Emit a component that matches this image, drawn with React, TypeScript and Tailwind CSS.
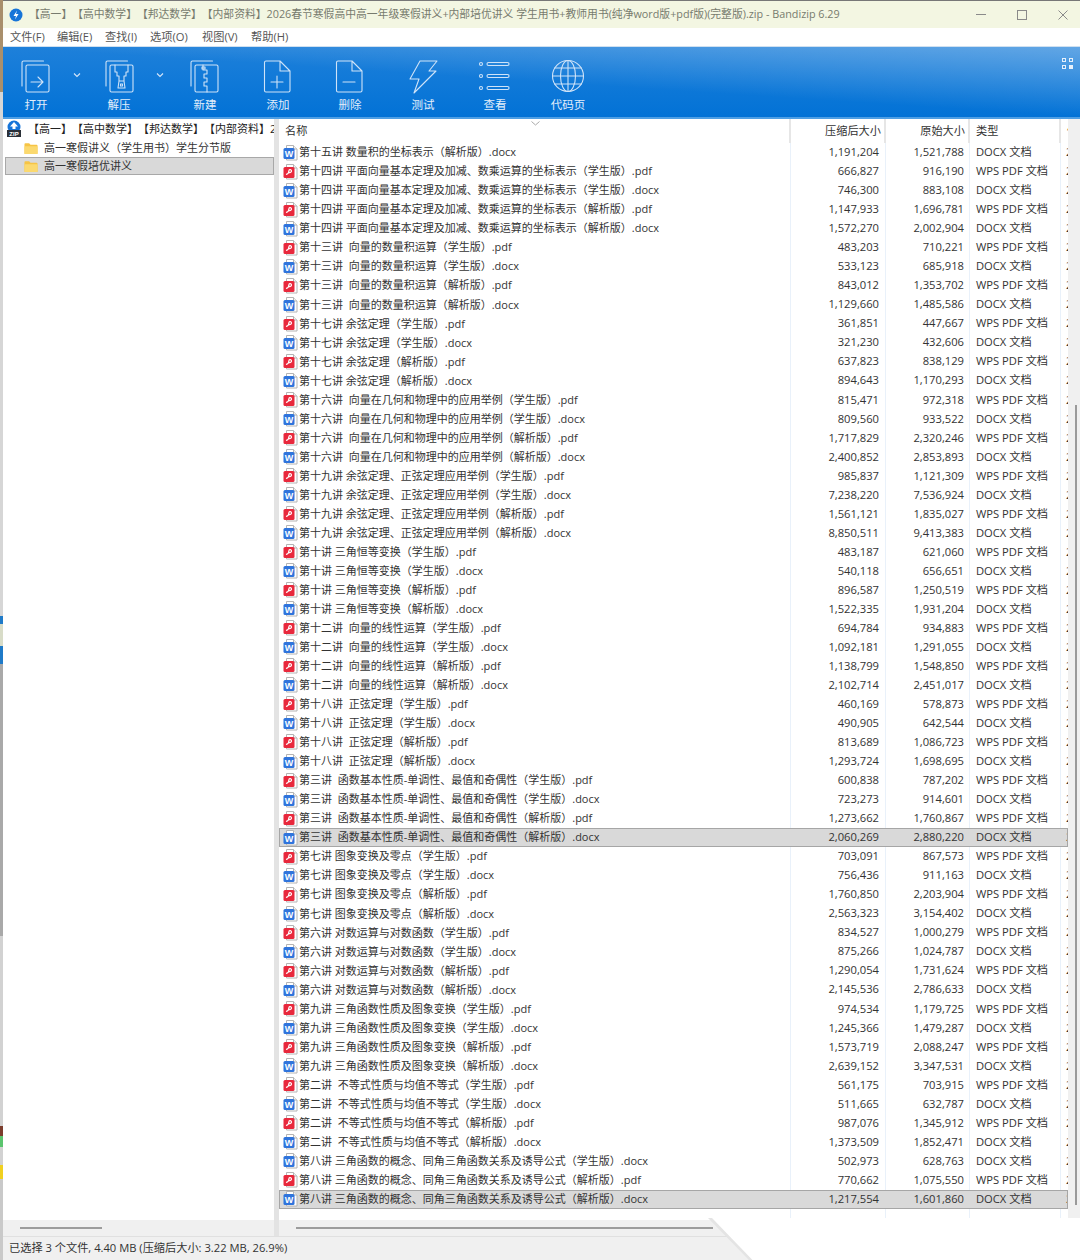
import type { ReactNode } from "react";

const VARIANTS = ["（学生版）.pdf", "（学生版）.docx", "（解析版）.pdf", "（解析版）.docx"];

type Group = {
  title: string
  offset?: number
  sizes: [string, string][]
}

const GROUPS: Group[] = [
  { title: "第十五讲 数量积的坐标表示", offset: 3, sizes: [["1,191,204", "1,521,788"]] },
  { title: "第十四讲 平面向量基本定理及加减、数乘运算的坐标表示", sizes: [["666,827", "916,190"], ["746,300", "883,108"], ["1,147,933", "1,696,781"], ["1,572,270", "2,002,904"]] },
  { title: "第十三讲  向量的数量积运算", sizes: [["483,203", "710,221"], ["533,123", "685,918"], ["843,012", "1,353,702"], ["1,129,660", "1,485,586"]] },
  { title: "第十七讲 余弦定理", sizes: [["361,851", "447,667"], ["321,230", "432,606"], ["637,823", "838,129"], ["894,643", "1,170,293"]] },
  { title: "第十六讲  向量在几何和物理中的应用举例", sizes: [["815,471", "972,318"], ["809,560", "933,522"], ["1,717,829", "2,320,246"], ["2,400,852", "2,853,893"]] },
  { title: "第十九讲 余弦定理、正弦定理应用举例", sizes: [["985,837", "1,121,309"], ["7,238,220", "7,536,924"], ["1,561,121", "1,835,027"], ["8,850,511", "9,413,383"]] },
  { title: "第十讲 三角恒等变换", sizes: [["483,187", "621,060"], ["540,118", "656,651"], ["896,587", "1,250,519"], ["1,522,335", "1,931,204"]] },
  { title: "第十二讲  向量的线性运算", sizes: [["694,784", "934,883"], ["1,092,181", "1,291,055"], ["1,138,799", "1,548,850"], ["2,102,714", "2,451,017"]] },
  { title: "第十八讲  正弦定理", sizes: [["460,169", "578,873"], ["490,905", "642,544"], ["813,689", "1,086,723"], ["1,293,724", "1,698,695"]] },
  { title: "第三讲  函数基本性质-单调性、最值和奇偶性", sizes: [["600,838", "787,202"], ["723,273", "914,601"], ["1,273,662", "1,760,867"], ["2,060,269", "2,880,220"]] },
  { title: "第七讲 图象变换及零点", sizes: [["703,091", "867,573"], ["756,436", "911,163"], ["1,760,850", "2,203,904"], ["2,563,323", "3,154,402"]] },
  { title: "第六讲 对数运算与对数函数", sizes: [["834,527", "1,000,279"], ["875,266", "1,024,787"], ["1,290,054", "1,731,624"], ["2,145,536", "2,786,633"]] },
  { title: "第九讲 三角函数性质及图象变换", sizes: [["974,534", "1,179,725"], ["1,245,366", "1,479,287"], ["1,573,719", "2,088,247"], ["2,639,152", "3,347,531"]] },
  { title: "第二讲  不等式性质与均值不等式", sizes: [["561,175", "703,915"], ["511,665", "632,787"], ["987,076", "1,345,912"], ["1,373,509", "1,852,471"]] },
  { title: "第八讲 三角函数的概念、同角三角函数关系及诱导公式", offset: 1, sizes: [["502,973", "628,763"], ["770,662", "1,075,550"], ["1,217,554", "1,601,860"]] },
];

const ROWS = GROUPS.flatMap((g) =>
  g.sizes.map(([packed, size], i) => {
    const variant = VARIANTS[i + (g.offset ?? 0)];
    return { name: g.title + variant, packed, size, pdf: variant.endsWith(".pdf") };
  })
);

const SELECTED = [36, 55];

function FileIcon({ pdf }: { pdf: boolean }) {
  return (
    <svg width="15" height="16" viewBox="0 0 15 16" className="shrink-0">
      <path d="M3.5.5h7l3.5 3.500v11h-10.500z" fill="#fff" stroke="#b4b4b4" />
      <path d="M10.500.5v3.500h3.500" fill="#f2f2f2" stroke="#b4b4b4" />
      <rect x="0.500" y="3" width="11" height="11" rx="1.500" fill={pdf ? "#e8283c" : "#2f74dc"} />
      {pdf ? (
        <path d="M3 10.500c2-.5 3-2 3-4 0-1.500 2.500-1 2.500.5s-2 2-3.500 1.500" fill="none" stroke="#fff" strokeWidth="1.200" />
      ) : (
        <text x="6" y="12" textAnchor="middle" fontSize="9" fontWeight="700" fill="#fff" fontFamily="Liberation Sans">W</text>
      )}
    </svg>
  )
}

function FolderIcon() {
  return (
    <svg width="14" height="13" viewBox="0 0 15 13" className="shrink-0">
      <path d="M.5 2a1 1 0 0 1 1-1h4l1.500 1.500h6.500a1 1 0 0 1 1 1v8a1 1 0 0 1-1 1h-12a1 1 0 0 1-1-1z" fill="#f6c445" />
      <rect x="0.500" y="4" width="14" height="8.500" rx="1" fill="#fbd96f" />
    </svg>
  )
}

function ToolIcon({ children }: { children: ReactNode }) {
  return (
    <svg width="36" height="36" viewBox="0 0 36 36" fill="none" stroke="#cfe3f8" strokeWidth="1.100" strokeLinejoin="round" strokeLinecap="round">
      {children}
    </svg>
  )
}

function ToolButton({ label, width, children }: { label: string; width: string; children: ReactNode }) {
  return (
    <div className={`${width} flex flex-col items-center shrink-0`}>
      {children}
      <span className="mt-[2px] text-[11.5px] leading-[16px] text-[#e2eefb]">{label}</span>
    </div>
  )
}

function Chevron() {
  return (
    <svg width="8" height="6" viewBox="0 0 8 6" fill="none" stroke="#d7e7f9" strokeWidth="1.100" className="mt-[13px] shrink-0">
      <path d="M1 1.500l3 3 3-3" />
    </svg>
  )
}

export default function App() {
  return (
    <div className="relative w-[1080px] h-[1260px] flex overflow-hidden bg-white text-[#333] font-['Open_Sans','Noto_Sans_CJK_SC',sans-serif] text-[11.2px]">
      {/* desktop showing behind the window */}
      <div className="w-[3px] shrink-0 flex flex-col bg-[#c9c9c9]">
        <div className="h-[92px] bg-[#a98f6c]" />
        <div className="h-[524px] bg-[#d6d6d6]" />
        <div className="h-[8px] bg-[#1f7ac8]" />
        <div className="h-[22px] bg-[#d8dcc8]" />
        <div className="h-[18px] bg-[#1f7ac8]" />
        <div className="h-[272px] bg-[#a9a9a9]" />
        <div className="h-[190px] bg-[#d2d2d2]" />
        <div className="h-[10px] bg-[#7b3c2c]" />
        <div className="h-[11px] bg-[#5bc46e]" />
        <div className="h-[18px] bg-[#d2d2d2]" />
        <div className="h-[14px] bg-[#f0d020]" />
      </div>

      <div className="flex-1 min-w-0 flex flex-col">
        <div className="h-[28px] shrink-0 flex items-center bg-[#f3f6e2] border-t border-[#777] pl-[6px] text-[#777b6e]">
          <svg width="14" height="14" viewBox="0 0 14 14" className="shrink-0">
            <circle cx="7" cy="7" r="6.500" fill="#1674d8" />
            <path d="M8 2.500L4.500 8H7l-1 3.500L9.500 6H7z" fill="#fff" />
          </svg>
          <span className="ml-[6px] whitespace-nowrap text-[10.8px] [text-spacing-trim:space-all]">【高一】【高中数学】【邦达数学】【内部资料】2026春节寒假高中高一年级寒假讲义+内部培优讲义 学生用书+教师用书(纯净word版+pdf版)(完整版).zip - Bandizip 6.29</span>
          <div className="ml-auto flex items-center gap-[31px] pr-[12px]">
            <div className="w-[10px] h-px bg-[#8a8a8a]" />
            <div className="w-[10px] h-[10px] border border-[#8a8a8a]" />
            <svg width="10" height="10" viewBox="0 0 10 10" stroke="#8a8a8a"><path d="M.5.500l9 9M9.500.500l-9 9" /></svg>
          </div>
        </div>

        <div className="h-[18px] shrink-0 flex items-center pl-[7px] text-[#555]">
          <span className="w-[47px]">文件(F)</span>
          <span className="w-[48px]">编辑(E)</span>
          <span className="w-[45px]">查找(I)</span>
          <span className="w-[52px]">选项(O)</span>
          <span className="w-[49px]">视图(V)</span>
          <span>帮助(H)</span>
        </div>

        <div className="relative h-[73px] shrink-0 flex pt-[12px] border-t border-[#cfe0f0] border-b-2 border-b-[#4f9fe4] bg-[linear-gradient(to_bottom_left,rgba(255,255,255,0.3),rgba(255,255,255,0)_50%),linear-gradient(to_bottom,#1e80da,#0272d6)]">
          <ToolButton label="打开" width="w-[66px]">
            <ToolIcon>
              <path d="M4 27V3.500a1.500 1.500 0 0 1 1.500-1.500h20" />
              <rect x="8" y="6" width="23" height="27" rx="1.500" />
              <path d="M13 23h11M20 18l5 5-5 5" />
            </ToolIcon>
          </ToolButton>
          <div className="w-[16px] flex justify-center"><Chevron /></div>
          <ToolButton label="解压" width="w-[68px]">
            <ToolIcon>
              <path d="M5 27V3.500a1.500 1.500 0 0 1 1.500-1.500h20" />
              <rect x="9" y="6" width="23" height="27" rx="1.500" />
              <path d="M14 6v7h2v4h2v5M27 6v7h-2v4h-2v5M18 22h5l1 7h-7z" />
              <rect x="19.500" y="25" width="2" height="2" />
            </ToolIcon>
          </ToolButton>
          <div className="w-[14px] flex justify-center"><Chevron /></div>
          <ToolButton label="新建" width="w-[76px]">
            <ToolIcon>
              <path d="M4 27V3.500a1.500 1.500 0 0 1 1.500-1.500h20" />
              <rect x="8" y="6" width="23" height="27" rx="1.500" />
              <path d="M16 6v5h4v4h-3v4h3v4h-3v4h3v6" />
              <rect x="15" y="8" width="3" height="2" />
            </ToolIcon>
          </ToolButton>
          <ToolButton label="添加" width="w-[70px]">
            <ToolIcon>
              <path d="M6 2h14l10 10v19.500a1.500 1.500 0 0 1-1.500 1.500h-22.500a1.500 1.500 0 0 1-1.500-1.500v-28a1.500 1.500 0 0 1 1.500-1.500zM20 2v10h10" />
              <path d="M17 17v12M11 23h12" />
            </ToolIcon>
          </ToolButton>
          <ToolButton label="删除" width="w-[74px]">
            <ToolIcon>
              <path d="M6 2h14l10 10v19.500a1.500 1.500 0 0 1-1.500 1.500h-22.500a1.500 1.500 0 0 1-1.500-1.500v-28a1.500 1.500 0 0 1 1.500-1.500zM20 2v10h10" />
              <path d="M11 23h12" />
            </ToolIcon>
          </ToolButton>
          <ToolButton label="测试" width="w-[72px]">
            <ToolIcon>
              <path d="M15 2h17l-8 10h7L9 34l5-14H5z" />
            </ToolIcon>
          </ToolButton>
          <ToolButton label="查看" width="w-[72px]">
            <ToolIcon>
              <circle cx="4" cy="5" r="1.500" />
              <circle cx="4" cy="17" r="1.500" />
              <circle cx="4" cy="29" r="1.500" />
              <rect x="10" y="3.500" width="22" height="3" rx="1.500" />
              <rect x="10" y="15.500" width="22" height="3" rx="1.500" />
              <rect x="10" y="27.500" width="22" height="3" rx="1.500" />
            </ToolIcon>
          </ToolButton>
          <ToolButton label="代码页" width="w-[74px]">
            <ToolIcon>
              <circle cx="18" cy="17" r="15.500" />
              <ellipse cx="18" cy="17" rx="7.500" ry="15.500" />
              <path d="M18 1.500v31M2.500 17h31M4.500 9h27M4.500 25h27" />
            </ToolIcon>
          </ToolButton>
          <div className="absolute top-[11px] right-[7px] grid grid-cols-2 gap-[3px]">
            <div className="w-[4px] h-[4px] border border-[#e6f0fb]" />
            <div className="w-[4px] h-[4px] border border-[#e6f0fb]" />
            <div className="w-[4px] h-[4px] border border-[#e6f0fb]" />
            <div className="w-[4px] h-[4px] bg-[#e6f0fb]" />
          </div>
        </div>

        <div className="flex-1 min-h-0 flex">
          <div className="w-[271px] shrink-0 flex flex-col text-[11px]">
            <div className="flex-1 min-h-0 pl-[2px] overflow-hidden">
              <div className="h-[20px] flex items-center whitespace-nowrap overflow-hidden">
                <svg width="18" height="18" viewBox="0 0 18 18" className="shrink-0">
                  <circle cx="9" cy="7" r="6.500" fill="#1674d8" />
                  <path d="M9 2l4 4.500h-2.500V9h-3V6.500H5z" fill="#fff" />
                  <rect x="2" y="10" width="14" height="7" fill="#2a3038" />
                  <text x="9" y="16" textAnchor="middle" fontSize="6" fontWeight="700" fill="#fff" fontFamily="Liberation Sans">ZIP</text>
                </svg>
                <span className="ml-[5px] text-[#222] [text-spacing-trim:space-all]">【高一】【高中数学】【邦达数学】【内部资料】2026春节寒假高中高一年级</span>
              </div>
              <div className="h-[18px] flex items-center pl-[19px] whitespace-nowrap">
                <FolderIcon />
                <span className="ml-[6px]">高一寒假讲义（学生用书）学生分节版</span>
              </div>
              <div className="h-[18px] flex items-center pl-[18px] whitespace-nowrap bg-[#d9d9d9] border-y border-x border-[#a8a8a8]">
                <FolderIcon />
                <span className="ml-[6px]">高一寒假培优讲义</span>
              </div>
            </div>
            <div className="h-[16px] shrink-0 flex items-center bg-[#f0f0f0] pl-[17px]">
              <div className="w-[82px] h-[2px] bg-[#9c9c9c]" />
            </div>
          </div>

          <div className="w-[5px] shrink-0 bg-[#e3e3e3]" />

          <div className="flex-1 min-w-0 flex flex-col">
            <div className="flex-1 min-h-0 flex">
              <div className="relative w-[789px] shrink-0 overflow-hidden">
                <div className="absolute top-[24px] bottom-0 left-[511px] w-px bg-[#e9f1fa]" />
                <div className="absolute top-[24px] bottom-0 left-[606px] w-px bg-[#e9f1fa]" />
                <div className="absolute top-[24px] bottom-0 left-[690px] w-px bg-[#e9f1fa]" />
                <div className="absolute top-[24px] bottom-0 left-[781px] w-px bg-[#e9f1fa]" />
                <svg width="9" height="5" viewBox="0 0 9 5" fill="none" stroke="#aaa" className="absolute top-[2px] left-[252px]"><path d="M.5.500l4 3.500 4-3.500" /></svg>

                <div className="h-[24px] flex items-center">
                  <div className="w-[512px] pl-[6px] border-r-2 border-[#e6e6e6] h-full flex items-center">名称</div>
                  <div className="w-[95px] pr-[3px] text-right border-r-2 border-[#e6e6e6] h-full flex items-center justify-end">压缩后大小</div>
                  <div className="w-[84px] pr-[3px] text-right border-r-2 border-[#e6e6e6] h-full flex items-center justify-end">原始大小</div>
                  <div className="w-[91px] pl-[6px] border-r-2 border-[#e6e6e6] h-full flex items-center">类型</div>
                  <div className="pl-[6px] h-full flex items-center w-[7px] overflow-hidden text-[#b5763a]">修</div>
                </div>

                {ROWS.map((row, i) => (
                  <div
                    key={row.name}
                    className={`relative h-[19.036px] flex items-center whitespace-pre ${SELECTED.includes(i) ? "bg-[#d9d9d9] outline outline-[#a6a6a6] -outline-offset-1" : ""}`}
                  >
                    <div className="w-[511px] pl-[4px] flex items-center gap-[1px] text-[11px]">
                      <FileIcon pdf={row.pdf} />
                      <span>{row.name}</span>
                    </div>
                    <div className="w-[95px] pr-[6px] text-right">{row.packed}</div>
                    <div className="w-[84px] pr-[5px] text-right">{row.size}</div>
                    <div className="w-[91px] pl-[7px]">{row.pdf ? "WPS PDF 文档" : "DOCX 文档"}</div>
                    <div className="w-[8px] pl-[6px] overflow-hidden">2</div>
                  </div>
                ))}
              </div>
              <div className="flex-1 bg-[#f0f0f0] flex justify-end pr-[3px] pt-[286px] pb-[15px]">
                <div className="w-[2px] h-full bg-[#9a9a9a]" />
              </div>
            </div>
            <div className="h-[16px] shrink-0 flex items-center bg-[#f0f0f0] pl-[17px]">
              <div className="w-[417px] h-[2px] bg-[#9c9c9c]" />
            </div>
          </div>
        </div>

        <div className="h-[24px] shrink-0 flex items-center bg-[#f0f0f0] border-t border-[#e0e0e0] pl-[6px] text-[11.2px]">
          已选择 3 个文件, 4.40 MB (压缩后大小: 3.22 MB, 26.9%)
        </div>
      </div>

      {/* torn corner of the screenshot */}
      <div className="absolute left-[708px] top-[1218px] w-[372px] h-[42px] bg-[#e4e4e4] [clip-path:polygon(0_0,100%_0,100%_100%,11%_100%)]" />
      <div className="absolute left-[712px] top-[1218px] w-[368px] h-[42px] bg-white [clip-path:polygon(0_0,100%_0,100%_100%,11%_100%)]" />
    </div>
  )
}
